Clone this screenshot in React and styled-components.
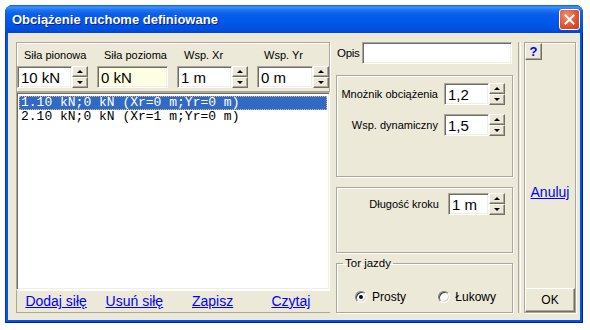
import React from "react";
import styled, { createGlobalStyle } from "styled-components";

const GlobalStyle = createGlobalStyle`
  html, body {
    margin: 0;
    padding: 0;
    background: #ffffff;
  }
  body {
    font-family: "Liberation Sans", Arial, sans-serif;
    color: #000;
  }
`;

const Window = styled.div`
  margin: 5px 0 0 5px;
  width: 578px;
  height: 318px;
  display: flex;
  flex-direction: column;
  border-radius: 8px 8px 0 0;
  overflow: hidden;
  background: #0553e2;
  box-shadow: inset 1px 0 #0831d9, inset -1px 0 #001ea0, inset 0 -1px #001ea0;
`;

const TitleBar = styled.div`
  height: 28px;
  flex: none;
  display: flex;
  align-items: center;
  justify-content: space-between;
  padding: 0 3px 0 7px;
  background: linear-gradient(
    180deg,
    #0a5bd6 0px,
    #3d95ff 2px,
    #1f72f2 5px,
    #0a5fea 9px,
    #0057e8 18px,
    #0050df 24px,
    #0346d0 28px
  );
`;

const Title = styled.span`
  font: bold 13px "Liberation Sans", Arial, sans-serif;
  color: #fff;
  text-shadow: 1px 1px #0a1e8c;
`;

const CloseButton = styled.div`
  width: 21px;
  height: 21px;
  box-sizing: border-box;
  border: 1px solid #fff;
  border-radius: 3px;
  background: radial-gradient(circle at 35% 30%, #f0906f 0%, #e0562f 55%, #c4411d 100%);
  display: flex;
  align-items: center;
  justify-content: center;
`;

const Frame = styled.div`
  flex: 1;
  display: flex;
  padding: 0 3px 3px 3px;
`;

const Client = styled.div`
  flex: 1;
  display: flex;
  background: #ece9d8;
  padding: 9px 4px 7px 8px;
`;

/* ---------- shared bits ---------- */

const Etched = styled.div`
  box-sizing: border-box;
  border: 1px solid #aca899;
  box-shadow: inset 1px 1px #fff, 1px 1px #fff;
`;

const Field = styled.div`
  box-sizing: border-box;
  height: 22px;
  flex: 1;
  min-width: 0;
  border: 1px solid;
  border-color: #aca899 #fff #fff #aca899;
  box-shadow: inset 1px 1px #716f64, inset -1px -1px #f1efe2;
  background: ${(p) => p.$bg || "#fff"};
  font-size: 15px;
  line-height: 19px;
  padding: 1px 2px 0 3px;
  white-space: nowrap;
  overflow: hidden;
`;

const SpinWrap = styled.div`
  display: flex;
  width: ${(p) => (p.$w ? `${p.$w}px` : "auto")};
`;

const SpinCol = styled.div`
  width: 16px;
  display: flex;
  flex-direction: column;
  flex: none;
`;

const SpinBtn = styled.div`
  height: 11px;
  box-sizing: border-box;
  background: #ece9d8;
  border: 1px solid;
  border-color: #fff #716f64 #716f64 #fff;
  box-shadow: inset -1px -1px #aca899;
  display: flex;
  align-items: center;
  justify-content: center;

  &::after {
    content: "";
    width: 0;
    height: 0;
    border-left: 3px solid transparent;
    border-right: 3px solid transparent;
    ${(p) =>
      p.$down
        ? "border-top: 3px solid #000;"
        : "border-bottom: 3px solid #000; margin-top: -1px;"}
  }
`;

const Spin = ({ value, w }) => (
  <SpinWrap $w={w}>
    <Field>{value}</Field>
    <SpinCol>
      <SpinBtn />
      <SpinBtn $down />
    </SpinCol>
  </SpinWrap>
);

const Link = styled.a`
  color: #0000ff;
  text-decoration: underline;
  font-size: 14px;
  cursor: pointer;
`;

/* ---------- left panel ---------- */

const LeftPanel = styled.div`
  width: 314px;
  display: flex;
  flex-direction: column;
`;

const Header = styled(Etched)`
  height: 50px;
  display: grid;
  grid-template-columns: 71px 71px 71px 72px;
  grid-template-rows: 13px 22px;
  column-gap: 9px;
  row-gap: 4px;
  padding: 6px 0 3px 0;
`;

const ColLabel = styled.div`
  font-size: 11px;
  line-height: 13px;
  padding-left: 7px;
  white-space: nowrap;
`;

const ListBox = styled.div`
  flex: 1;
  box-sizing: border-box;
  background: #fff;
  border: 1px solid;
  border-color: #aca899 #fff #fff #aca899;
  box-shadow: inset 1px 1px #716f64, inset -1px -1px #f1efe2;
  padding: 3px 2px;
`;

const ListItem = styled.div`
  height: 14px;
  line-height: 14px;
  font-family: "Liberation Mono", "Courier New", monospace;
  font-size: 13px;
  padding-left: 2px;
  white-space: pre;
  color: ${(p) => (p.$selected ? "#fff" : "#000")};
  background: ${(p) => (p.$selected ? "#316ac5" : "transparent")};
  outline: ${(p) => (p.$selected ? "1px dotted #e8b870" : "none")};
  outline-offset: -1px;
`;

const Footer = styled.div`
  height: 23px;
  box-sizing: border-box;
  border-top: 1px solid #fff;
  border-left: 1px solid #aca899;
  border-bottom: 1px solid #aca899;
  display: grid;
  grid-template-columns: repeat(4, 1fr);
  justify-items: center;
  align-items: center;
  padding-bottom: 1px;
`;

/* ---------- middle column ---------- */

const Middle = styled.div`
  width: 177px;
  margin-left: 6px;
  display: flex;
  flex-direction: column;
`;

const OpisRow = styled.div`
  display: flex;
  align-items: center;
  height: 22px;
  padding-left: 1px;
  padding-right: 1px;
`;

const OpisLabel = styled.span`
  font-size: 11.5px;
  letter-spacing: -0.3px;
  width: 25px;
  flex: none;
`;

const Group = styled(Etched)`
  height: ${(p) => p.$h}px;
  margin-top: ${(p) => p.$mt}px;
  display: flex;
  flex-direction: column;
  gap: 9px;
  padding: ${(p) => p.$pt}px 7px 0 0;
`;

const FieldRow = styled.div`
  display: flex;
  align-items: center;
  justify-content: flex-end;
  gap: ${(p) => p.$gap || 6}px;
`;

const RowLabel = styled.span`
  font-size: 11px;
  white-space: nowrap;
`;

const Fieldset = styled.fieldset`
  flex: 1;
  margin: 4px 0 0 0;
  min-width: 0;
  box-sizing: border-box;
  border: 1px solid #aca899;
  box-shadow: inset 1px 1px #fff, 1px 1px #fff;
  padding: 0 16px 8px 18px;
  display: flex;
  align-items: flex-end;
  justify-content: space-between;
`;

const Legend = styled.legend`
  font-size: 11.5px;
  line-height: 13px;
  padding: 0 2px;
  margin-left: -12px;
`;

const RadioLabel = styled.label`
  display: flex;
  align-items: center;
  gap: 5px;
  font-size: 12px;
`;

const RadioDot = styled.span`
  width: 12px;
  height: 12px;
  box-sizing: border-box;
  border-radius: 50%;
  border: 1px solid;
  border-color: #808080 #fff #fff #808080;
  box-shadow: inset 1px 1px #404040, inset -1px -1px #d4d0c8;
  background: #fff;
  display: flex;
  align-items: center;
  justify-content: center;

  &::after {
    content: "";
    width: 4px;
    height: 4px;
    border-radius: 50%;
    background: ${(p) => (p.$checked ? "#000" : "transparent")};
  }
`;

/* ---------- right column ---------- */

const Separator = styled.div`
  width: 1px;
  margin: 0 3px 0 5px;
  border-left: 1px solid #aca899;
  border-right: 1px solid #fff;
`;

const RightCol = styled(Etched)`
  width: 52px;
  display: flex;
  flex-direction: column;
  align-items: stretch;
`;

const Raised = styled.div`
  box-sizing: border-box;
  background: #ece9d8;
  border: 1px solid;
  border-color: #fff #716f64 #716f64 #fff;
  box-shadow: inset -1px -1px #aca899;
  display: flex;
  align-items: center;
  justify-content: center;
`;

const HelpButton = styled(Raised)`
  width: 17px;
  height: 17px;
  color: #0000d8;
  font-weight: bold;
  font-size: 13px;
`;

const CancelWrap = styled.div`
  flex: 1;
  display: flex;
  justify-content: center;
  padding-top: 124px;
`;

const OkButton = styled(Raised)`
  height: 24px;
  font-size: 12px;
`;

export default function App() {
  return (
    <>
      <GlobalStyle />
      <Window>
        <TitleBar>
          <Title>Obciążenie ruchome definiowane</Title>
          <CloseButton>
            <svg width="11" height="11" viewBox="0 0 11 11">
              <path d="M1.5 1.5 L9.5 9.5 M9.5 1.5 L1.5 9.5" stroke="#fff" strokeWidth="2" strokeLinecap="square" />
            </svg>
          </CloseButton>
        </TitleBar>
        <Frame>
          <Client>
            <LeftPanel>
              <Header>
                <ColLabel>Siła pionowa</ColLabel>
                <ColLabel>Siła pozioma</ColLabel>
                <ColLabel>Wsp. Xr</ColLabel>
                <ColLabel>Wsp. Yr</ColLabel>
                <Spin value="10 kN" />
                <Field $bg="#ffffe6">0 kN</Field>
                <Spin value="1 m" />
                <Spin value="0 m" />
              </Header>
              <ListBox>
                <ListItem $selected>1.10 kN;0 kN (Xr=0 m;Yr=0 m)</ListItem>
                <ListItem>2.10 kN;0 kN (Xr=1 m;Yr=0 m)</ListItem>
              </ListBox>
              <Footer>
                <Link>Dodaj siłę</Link>
                <Link>Usuń siłę</Link>
                <Link>Zapisz</Link>
                <Link>Czytaj</Link>
              </Footer>
            </LeftPanel>

            <Middle>
              <OpisRow>
                <OpisLabel>Opis</OpisLabel>
                <Field />
              </OpisRow>
              <Group $h={102} $mt={11} $pt={7}>
                <FieldRow>
                  <RowLabel>Mnożnik obciążenia</RowLabel>
                  <Spin value="1,2" w={61} />
                </FieldRow>
                <FieldRow>
                  <RowLabel>Wsp. dynamiczny</RowLabel>
                  <Spin value="1,5" w={61} />
                </FieldRow>
              </Group>
              <Group $h={66} $mt={10} $pt={5}>
                <FieldRow $gap={9}>
                  <RowLabel>Długość kroku</RowLabel>
                  <Spin value="1 m" w={57} />
                </FieldRow>
              </Group>
              <Fieldset>
                <Legend>Tor jazdy</Legend>
                <RadioLabel>
                  <RadioDot $checked />
                  Prosty
                </RadioLabel>
                <RadioLabel>
                  <RadioDot />
                  Łukowy
                </RadioLabel>
              </Fieldset>
            </Middle>

            <Separator />

            <RightCol>
              <HelpButton>?</HelpButton>
              <CancelWrap>
                <Link>Anuluj</Link>
              </CancelWrap>
              <OkButton>OK</OkButton>
            </RightCol>
          </Client>
        </Frame>
      </Window>
    </>
  );
}
